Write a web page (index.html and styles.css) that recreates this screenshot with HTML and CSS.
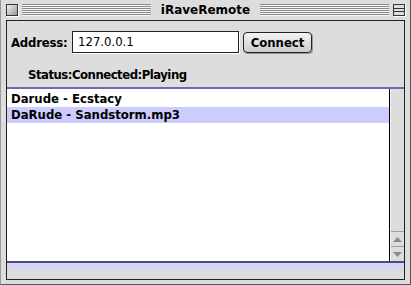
FILE: index.html
```html
<!DOCTYPE html>
<html>
<head>
<meta charset="utf-8">
<link rel="stylesheet" href="styles.css">
</head>
<body>
<div class="window">
  <div class="titlebar">
    <div class="closebox"></div>
    <div class="stripes"></div>
    <div class="title">iRaveRemote</div>
    <div class="stripes"></div>
    <div class="zoombox"><div class="zoominner"></div></div>
  </div>
  <div class="frame">
    <div class="controls">
      <span class="label">Address:</span>
      <div class="field">127.0.0.1</div>
      <div class="button">Connect</div>
    </div>
    <div class="status">Status:Connected:Playing</div>
    <div class="listarea">
      <div class="list">
        <div class="item">Darude - Ecstacy</div>
        <div class="item selected">DaRude - Sandstorm.mp3</div>
      </div>
      <div class="scrollbar">
        <div class="track"></div>
        <div class="arrow up"><svg width="9" height="5" viewBox="0 0 9 5"><path d="M4.5 0 L9 5 L0 5 Z" fill="#8a8a8a"/></svg></div>
        <div class="arrow down"><svg width="9" height="5" viewBox="0 0 9 5"><path d="M0 0 L9 0 L4.5 5 Z" fill="#8a8a8a"/></svg></div>
      </div>
    </div>
    <div class="bottom"><div class="band"></div></div>
  </div>
</div>
</body>
</html>
```
FILE: styles.css
```css
html, body {
  margin: 0;
  padding: 0;
  background: #ffffff;
}
body {
  font-family: "DejaVu Sans Condensed", "DejaVu Sans", sans-serif;
}
.window {
  width: 411px;
  height: 285px;
  box-sizing: border-box;
  background: #dddddd;
  border-left: 1px solid #999;
  border-right: 1px solid #555;
  border-bottom: 1px solid #555;
  display: flex;
  flex-direction: column;
}
.titlebar {
  height: 20px;
  display: flex;
  align-items: center;
  padding: 0 5px 0 5px;
  gap: 4px;
  box-sizing: border-box;
}
.closebox {
  width: 10px;
  height: 10px;
  border: 1px solid #333;
  background: linear-gradient(135deg, #f0f0f0, #9a9a9a);
  box-shadow: 1px 1px 0 #fff;
}
.stripes {
  flex: 1;
  height: 12px;
  background: repeating-linear-gradient(to bottom, #8a8a8a 0, #8a8a8a 1px, #f4f4f4 1px, #f4f4f4 2px);
}
.title {
  font-family: "DejaVu Sans", sans-serif;
  font-weight: bold;
  font-size: 12px;
  padding: 0 6px;
  color: #000;
  line-height: 14px;
}
.zoombox {
  width: 10px;
  height: 10px;
  border: 1px solid #333;
  background: #dddddd;
  box-shadow: 1px 1px 0 #fff;
}
.zoominner {
  margin-top: 3px;
  height: 2px;
  border-top: 1px solid #333;
  border-bottom: 1px solid #333;
}
.frame {
  flex: 1;
  margin: 0 5px 4px 5px;
  border: 1px solid #222;
  display: flex;
  flex-direction: column;
  background: #dddddd;
}
.controls {
  display: flex;
  align-items: center;
  padding: 10px 0 0 4px;
  height: 22px;
}
.label {
  font-weight: bold;
  font-size: 13px;
  width: 61px;
  letter-spacing: -0.2px;
}
.field {
  width: 160px;
  height: 20px;
  border: 1px solid #222;
  background: #fff;
  font-size: 13px;
  line-height: 20px;
  padding-left: 5px;
  box-shadow: 1px 1px 0 #fff;
}
.button {
  margin-left: 4px;
  width: 67px;
  height: 19px;
  border: 1px solid #222;
  border-radius: 4px;
  background: linear-gradient(to bottom, #f4f4f4, #cccccc);
  box-shadow: 1px 1px 0 #999;
  font-weight: bold;
  font-size: 13px;
  text-align: center;
  line-height: 19px;
}
.status {
  font-weight: bold;
  font-size: 13px;
  line-height: 14px;
  letter-spacing: -0.5px;
  padding: 15px 0 0 21px;
  height: 34px;
  box-sizing: border-box;
}
.listarea {
  flex: 1;
  display: flex;
  border-top: 2px solid #6b6bb0;
  background: #fff;
}
.list {
  flex: 1;
  padding-top: 2px;
  border-right: 1px solid #000;
}
.item {
  font-weight: bold;
  font-size: 13px;
  height: 16px;
  line-height: 16px;
  padding-left: 4px;
}
.selected {
  background: #ccccff;
}
.scrollbar {
  width: 13px;
  background: #dddddd;
  display: flex;
  flex-direction: column;
  border-left: 1px solid #f2f2f2;
}
.track {
  flex: 1;
}
.arrow {
  height: 14px;
  display: flex;
  align-items: center;
  justify-content: center;
  border-top: 1px solid #a0a0a0;
}
.bottom {
  height: 16px;
  border-top: 2px solid #4a4a88;
  background: #dddddd;
}
.band {
  height: 7px;
  background: #d6d6f4;
}
```
